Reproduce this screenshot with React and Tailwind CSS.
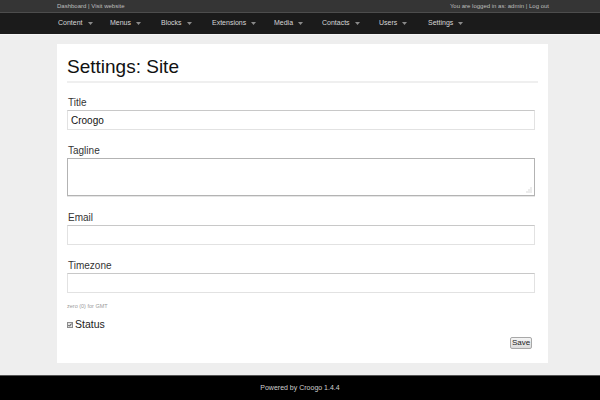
import React from 'react';

const menu = [
  { name: 'Content', w: 'w-[52px]' },
  { name: 'Menus', w: 'w-[51px]' },
  { name: 'Blocks', w: 'w-[51px]' },
  { name: 'Extensions', w: 'w-[62px]' },
  { name: 'Media', w: 'w-[48px]' },
  { name: 'Contacts', w: 'w-[57px]' },
  { name: 'Users', w: 'w-[49px]' },
  { name: 'Settings', w: 'w-[50px]' },
];

const Caret = () => (
  <svg width="5" height="3" viewBox="0 0 5 3" className="ml-[5px]">
    <path d="M0 0 L5 0 L2.5 3 Z" fill="#8a8a8a" />
  </svg>
);

const Label = ({ children }) => (
  <div className="text-[10px] leading-[12px] text-[#333] mb-[1px] pl-[1px]">{children}</div>
);

const Input = ({ value }) => (
  <div className="h-[20px] mr-[3px] border border-[#e2e2e2] border-t-[#c8c8c8] bg-white flex items-center px-[3px] text-[10px] text-[#111]">
    {value}
  </div>
);

export default function App() {
  return (
    <div className="w-[600px] h-[400px] flex flex-col bg-[#eeeeee] font-[family-name:'Liberation_Sans',Arial,sans-serif] overflow-hidden">
      {/* top bar */}
      <div className="h-[13px] bg-[#353535] border-b border-[#4d4d4d] flex items-center justify-between pl-[57px] pr-[51px] text-[6px] text-[#bdbdbd]">
        <span>Dashboard | Visit website</span>
        <span>You are logged in as: admin | Log out</span>
      </div>

      {/* main nav */}
      <div className="h-[22px] bg-[#1b1b1b] border-b border-[#f7f7f7] flex items-center pl-[58px]">
        {menu.map((m) => (
          <div key={m.name} className={`${m.w} flex items-center text-[7px] text-[#d6d6d6]`}>
            <span>{m.name}</span>
            <Caret />
          </div>
        ))}
      </div>

      {/* content */}
      <div className="flex-1 pt-[9px] pl-[57px]">
        <div className="w-[491px] h-[319px] bg-white pt-[12.5px] px-[10px] flex flex-col">
          <h2 className="text-[19px] leading-[19px] text-[#111] pb-[5.5px] border-b-2 border-[#efefef]">Settings: Site</h2>

          <div className="mt-[14px]">
            <Label>Title</Label>
            <Input value="Croogo" />
          </div>

          <div className="mt-[15px]">
            <Label>Tagline</Label>
            <div className="relative h-[38px] mr-[3px] border border-[#b3b3b3] bg-white shadow-[0_1px_0_#e6e6e6]">
              <svg width="6" height="6" viewBox="0 0 6 6" className="absolute right-[2px] bottom-[2px]">
                <rect x="4.5" y="0.5" width="1" height="1" fill="#b5b5b5" />
                <rect x="4.5" y="2.5" width="1" height="1" fill="#b5b5b5" />
                <rect x="4.5" y="4.5" width="1" height="1" fill="#b5b5b5" />
                <rect x="2.5" y="2.5" width="1" height="1" fill="#b5b5b5" />
                <rect x="2.5" y="4.5" width="1" height="1" fill="#b5b5b5" />
                <rect x="0.5" y="4.5" width="1" height="1" fill="#b5b5b5" />
              </svg>
            </div>
          </div>

          <div className="mt-[16px]">
            <Label>Email</Label>
            <Input value="" />
          </div>

          <div className="mt-[15px]">
            <Label>Timezone</Label>
            <Input value="" />
          </div>

          <div className="mt-[9px] text-[5.5px] leading-[8px] text-[#9a9a9a]">zero (0) for GMT</div>

          <div className="mt-[8.5px] h-[12px] flex items-center">
            <svg width="6" height="6" viewBox="0 0 6 6" className="mr-[2px]">
              <rect x="0.5" y="0.5" width="5" height="5" fill="#e4e4e4" stroke="#8d8d8d" />
              <path d="M1.4 3 L2.5 4.2 L4.6 1.6" fill="none" stroke="#333" strokeWidth="0.9" />
            </svg>
            <span className="text-[10.5px] text-[#222]">Status</span>
          </div>

          <div className="mt-[6.5px] flex justify-end pr-[6px]">
            <button className="h-[12px] w-[22px] border border-[#a8a8a8] rounded-[2px] bg-gradient-to-b from-[#f4f4f4] to-[#dcdcdc] text-[8px] leading-[10px] text-[#222]">
              Save
            </button>
          </div>
        </div>
      </div>

      {/* footer */}
      <div className="h-[25px] bg-black border-t border-[#555] flex items-center justify-center text-[7px] text-[#cfcfcf]">
        Powered by Croogo 1.4.4
      </div>
    </div>
  );
}
